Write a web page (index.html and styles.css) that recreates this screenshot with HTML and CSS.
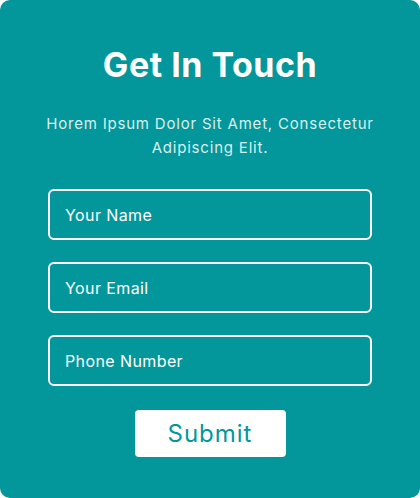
FILE: index.html
```html
<!DOCTYPE html>
<html lang="en">
<head>
<meta charset="utf-8">
<title>Get In Touch</title>
<link rel="stylesheet" href="styles.css">
</head>
<body>
<form class="card">
  <h1 class="title">Get In Touch</h1>
  <p class="lead">Horem Ipsum Dolor Sit Amet, Consectetur Adipiscing Elit.</p>
  <div class="fields">
    <input class="field" type="text" placeholder="Your Name">
    <input class="field" type="email" placeholder="Your Email">
    <input class="field" type="tel" placeholder="Phone Number">
  </div>
  <button class="submit" type="button">Submit</button>
</form>
</body>
</html>
```
FILE: styles.css
```css
html, body {
  margin: 0;
  padding: 0;
  background: #ffffff;
}
.card {
  box-sizing: border-box;
  width: 420px;
  height: 498px;
  background: #03979b;
  border-radius: 10px;
  padding: 40px 40px 41px;
  display: flex;
  flex-direction: column;
  align-items: center;
  font-family: "Inter", "Open Sans", sans-serif;
  color: #ffffff;
}
.title {
  margin: 0;
  font-size: 34px;
  line-height: 50px;
  font-weight: 700;
  letter-spacing: 0.5px;
}
.lead {
  margin: 22px 0 0;
  font-size: 15px;
  line-height: 24px;
  letter-spacing: 0.8px;
  text-align: center;
  color: rgba(255, 255, 255, 0.86);
  width: 340px;
}
.fields {
  margin-top: 29px;
  width: 324px;
  display: flex;
  flex-direction: column;
  gap: 22px;
}
.field {
  box-sizing: border-box;
  width: 100%;
  height: 51px;
  border: 2px solid #ffffff;
  border-radius: 6px;
  background: transparent;
  padding: 0 15px;
  font-family: inherit;
  font-size: 16px;
  letter-spacing: 0.4px;
  color: #ffffff;
  outline: none;
}
.field::placeholder {
  color: #ffffff;
  opacity: 1;
}
.submit {
  margin-top: 24px;
  width: 151px;
  height: 47px;
  border: none;
  border-radius: 4px;
  background: #ffffff;
  color: #03979b;
  font-family: inherit;
  font-size: 24px;
  letter-spacing: 1px;
  padding: 0;
  cursor: pointer;
}
```
